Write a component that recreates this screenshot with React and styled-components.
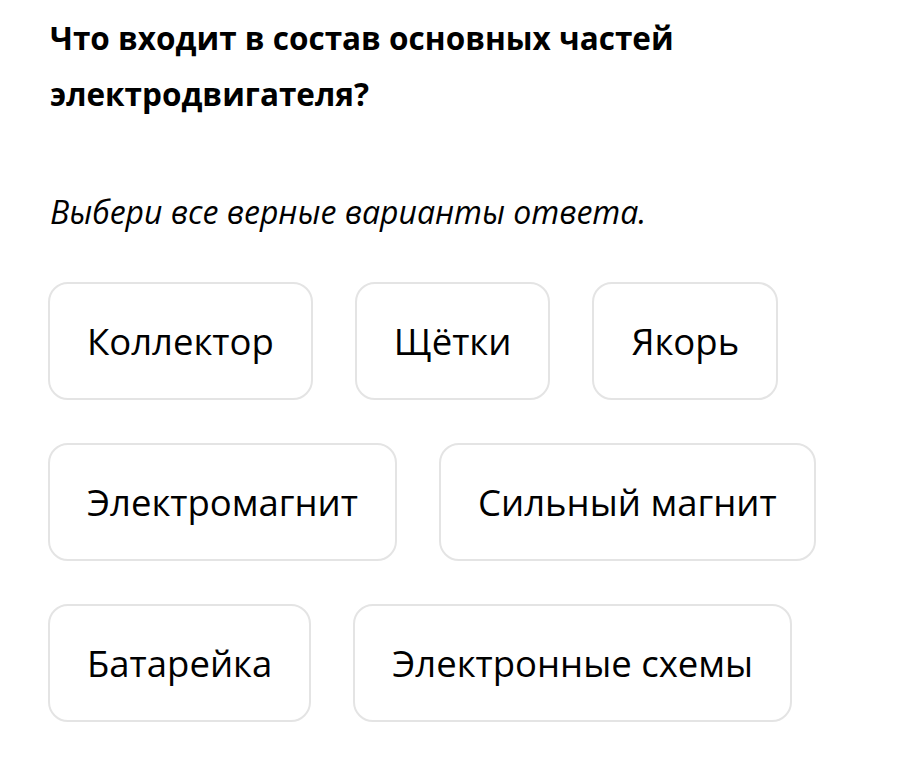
import React from "react";
import styled, { createGlobalStyle } from "styled-components";

const Global = createGlobalStyle`
  html, body { margin: 0; padding: 0; background: #ffffff; }
  body { font-family: "Open Sans", "Noto Sans", sans-serif; color: #000; }
`;

const Page = styled.main`
  padding: 10px 40px 0 50px;
  display: flex;
  flex-direction: column;
`;

const Question = styled.h1`
  margin: 0;
  font-size: 31.5px;
  font-weight: 700;
  line-height: 56px;
  max-width: 660px;
`;

const Hint = styled.p`
  margin: 70px 0 0;
  font-size: 32px;
  font-style: italic;
  line-height: 40px;
`;

const Options = styled.div`
  margin-top: 50px;
  margin-left: -2px;
  display: flex;
  flex-direction: column;
  gap: 43px;
`;

const Row = styled.div`
  display: flex;
  gap: 42px;
`;

const Option = styled.button`
  height: 118px;
  box-sizing: border-box;
  padding: 0 37px;
  border: 2px solid #e4e4e4;
  border-radius: 20px;
  background: #fff;
  font-family: inherit;
  font-size: 36.5px;
  color: #000;
  white-space: nowrap;
  cursor: pointer;
`;

const rows = [
  ["Коллектор", "Щётки", "Якорь"],
  ["Электромагнит", "Сильный магнит"],
  ["Батарейка", "Электронные схемы"],
];

export default function App() {
  return (
    <>
      <Global />
      <Page>
        <Question>Что входит в состав основных частей электродвигателя?</Question>
        <Hint>Выбери все верные варианты ответа.</Hint>
        <Options>
          {rows.map((r, i) => (
            <Row key={i}>
              {r.map((t) => (
                <Option key={t}>{t}</Option>
              ))}
            </Row>
          ))}
        </Options>
      </Page>
    </>
  );
}
